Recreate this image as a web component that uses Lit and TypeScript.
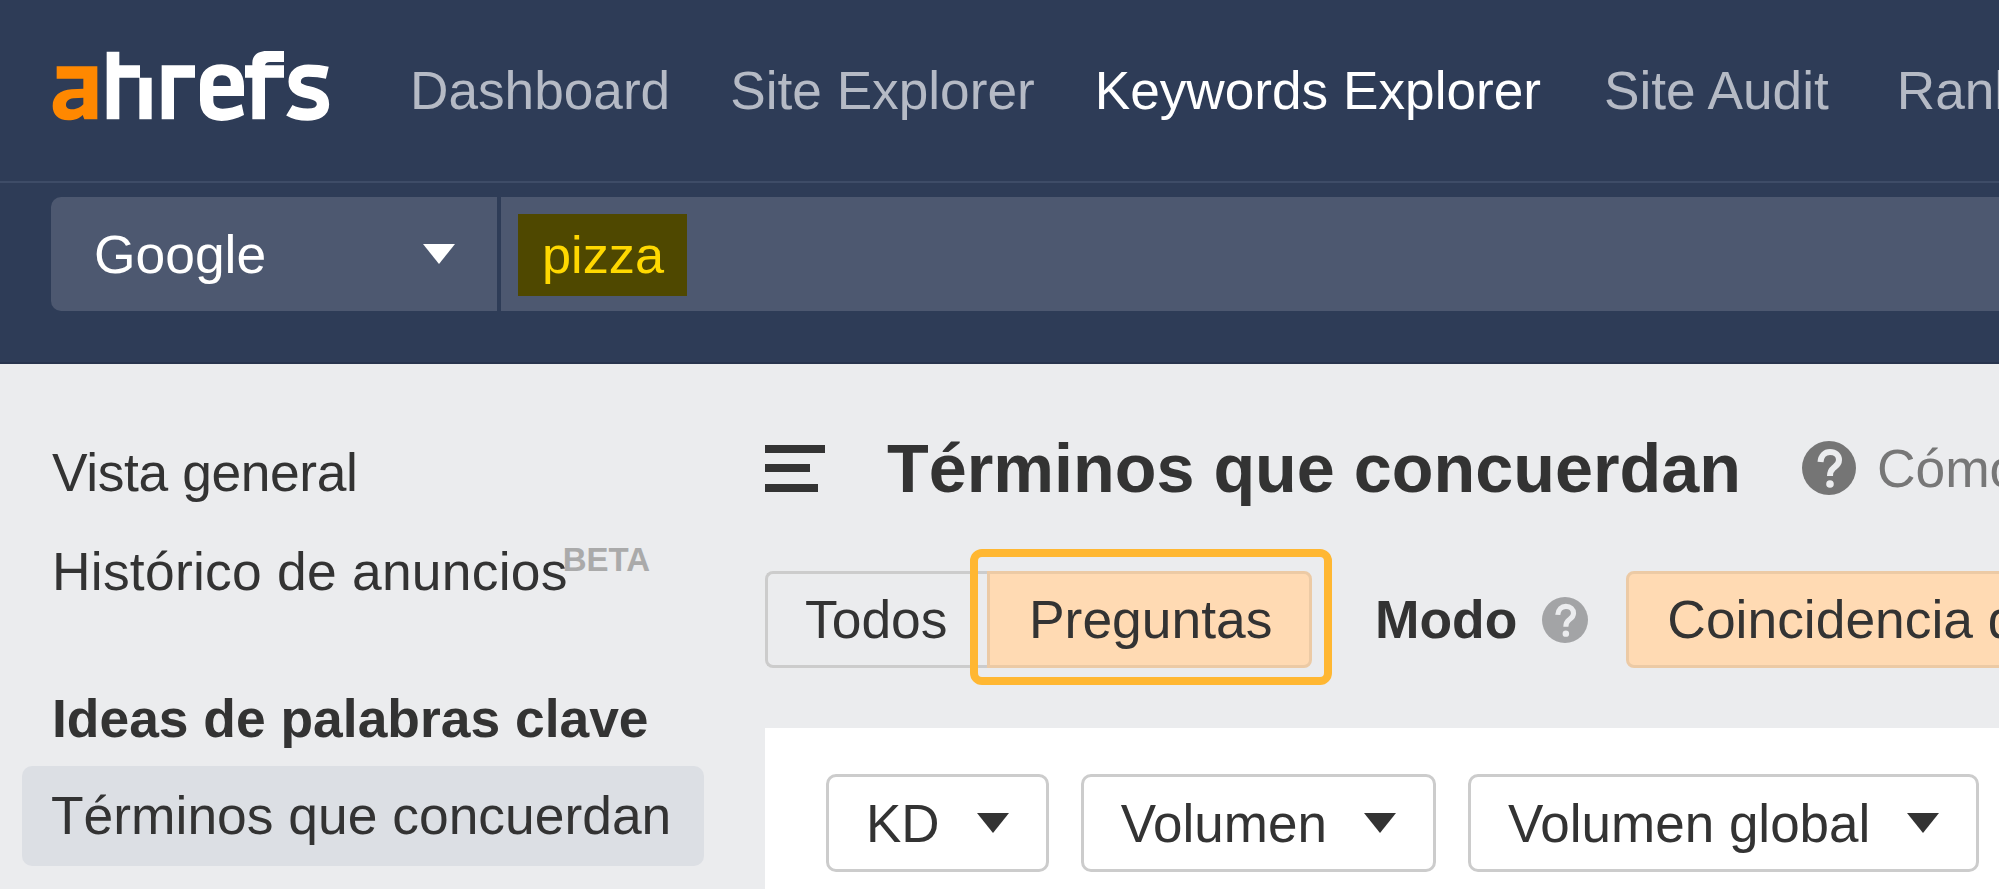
import { LitElement, html, css, svg } from "lit";
import { customElement } from "lit/decorators.js";

const helpIcon = (size: number, fill: string) => html`
    <svg class="help" width=${size} height=${size} viewBox="0 0 54 54">
        <circle cx="27" cy="27" r="27" fill=${fill}></circle>
        ${svg`<path d="M18.5 21C19 14.5 23 11 28 11C33.5 11 37 14.5 37 19C37 23.5 34 25 31.5 27C29 29 28 30.5 28 35" fill="none" stroke="#ebecee" stroke-width="6"></path>
        <circle cx="28" cy="43" r="3.8" fill="#ebecee"></circle>`}
    </svg>
`;

const caret = (cls: string) => html`<span class="caret ${cls}"></span>`;

@customElement("app-root")
export class AppRoot extends LitElement {
    static styles = css`
        :host {
            display: block;
            width: 1999px;
            height: 889px;
            overflow: hidden;
            background: #ebecee;
            color: #333;
            font-family: "Liberation Sans", Arial, sans-serif;
            font-size: 53.4px;
        }
        .header {
            height: 364px;
            box-sizing: border-box;
            background: #2e3c57;
            border-bottom: 2px solid #28344d;
        }
        .top {
            display: flex;
            align-items: center;
            height: 183px;
            box-sizing: border-box;
            padding-left: 40px;
            border-bottom: 2px solid #3e4c67;
        }
        .logo {
            flex: none;
            margin: -10px 70px 0 0;
        }
        .nav {
            display: flex;
            gap: 60px;
            white-space: nowrap;
            font-size: 53.2px;
            color: #b5bac5;
        }
        .nav .active {
            color: #fff;
        }
        .nav .audit {
            margin-left: 3px;
        }
        .nav .rank {
            margin-left: 8px;
        }
        .search {
            display: flex;
            gap: 4px;
            height: 114px;
            margin: 14px 0 0 51px;
        }
        .engine {
            flex: none;
            display: flex;
            align-items: center;
            justify-content: space-between;
            width: 446px;
            box-sizing: border-box;
            padding: 0 42px 0 43px;
            background: #4d5870;
            border-radius: 10px 0 0 10px;
            color: #fff;
        }
        .query {
            flex: 1;
            display: flex;
            align-items: center;
            padding-left: 17px;
            background: #4d5870;
        }
        .term {
            display: flex;
            align-items: center;
            height: 82px;
            margin-top: 2px;
            padding: 0 23px 0 24px;
            background: #4f4800;
            color: #ffd800;
            font-size: 52.3px;
        }
        .caret {
            flex: none;
            width: 0;
            height: 0;
            border-style: solid;
            border-width: 20px 16px 0;
            border-color: #333 transparent transparent;
        }
        .caret.light {
            border-top-color: #fff;
        }
        .main {
            display: flex;
        }
        .side {
            flex: none;
            width: 765px;
            box-sizing: border-box;
            padding: 79px 61px 0 22px;
            line-height: 60px;
        }
        .item {
            padding-left: 30px;
            white-space: nowrap;
        }
        .item + .item {
            margin-top: 39px;
        }
        .tight {
            letter-spacing: -0.4px;
        }
        .loose {
            letter-spacing: 0.25px;
        }
        .beta {
            margin-left: -5px;
            font-size: 33px;
            font-weight: 700;
            line-height: 0;
            letter-spacing: 0;
            color: #aaa;
            vertical-align: 19px;
        }
        .side .group {
            margin-top: 87px;
            font-weight: 700;
        }
        .side .selected {
            display: flex;
            align-items: center;
            height: 100px;
            margin-top: 17px;
            padding-left: 29px;
            background: #dcdfe4;
            border-radius: 10px;
        }
        .content {
            flex: 1;
            min-width: 0;
        }
        .title-row {
            display: flex;
            align-items: center;
            height: 80px;
            margin-top: 64px;
            white-space: nowrap;
        }
        .burger {
            flex: none;
            margin-right: 62px;
        }
        h1 {
            margin: 0 61px 0 0;
            font-size: 68.3px;
            font-weight: 700;
        }
        .help {
            flex: none;
        }
        .how {
            margin-left: 21px;
            color: #777;
        }
        .controls {
            display: flex;
            align-items: center;
            height: 97px;
            margin-top: 63px;
            white-space: nowrap;
        }
        .tabs {
            position: relative;
            display: flex;
            height: 97px;
            margin-right: 63px;
        }
        .tab {
            display: flex;
            align-items: center;
            box-sizing: border-box;
            border: 3px solid #ccc;
        }
        .tab.all {
            width: 222px;
            padding-left: 37px;
            border-right: none;
            border-radius: 8px 0 0 8px;
        }
        .tab.questions {
            width: 325px;
            padding-left: 39px;
            border-radius: 0 8px 8px 0;
        }
        .on {
            background: #ffdab3;
            border-color: #eccaa5;
        }
        .callout {
            position: absolute;
            top: -22px;
            left: 205px;
            width: 362px;
            height: 136px;
            box-sizing: border-box;
            border: 8px solid #ffb732;
            border-radius: 12px;
        }
        .mode {
            font-weight: 700;
            margin-right: 25px;
        }
        .mode-btn {
            display: flex;
            align-items: center;
            height: 97px;
            box-sizing: border-box;
            margin-left: 38px;
            padding: 0 38px;
            border: 3px solid #eccaa5;
            border-radius: 8px;
        }
        .panel {
            display: flex;
            gap: 32px;
            margin-top: 60px;
            padding: 46px 0 20px 61px;
            height: 200px;
            background: #fff;
            white-space: nowrap;
            font-size: 53px;
        }
        .filter {
            display: flex;
            align-items: center;
            gap: 37px;
            height: 98px;
            box-sizing: border-box;
            padding: 0 37px;
            border: 3px solid #ccc;
            border-radius: 10px;
        }
    `;

    render() {
        return html`
            <div class="header">
                <div class="top">
                    <svg class="logo" width="300" height="90" viewBox="0 0 900 270" role="img" aria-label="ahrefs">
                        <path fill="#ff8800" fill-rule="evenodd" d="M50 76H172V235H133L128 222C118 232 105 238 85 238C55 238 38 220 38 195C38 165 60 147 95 145L130 143V113H50ZM130 170L100 172C85 173 78 182 78 192C78 200 85 205 97 205C112 205 122 198 130 190Z"></path>
                        <path fill="#fff" d="M200 32H238V73H300V110H335V235H298V110H238V235H200ZM365 73H465V110H402V235H365Z"></path>
                        <path fill="#fff" fill-rule="evenodd" d="M545 70C590 70 612 95 612 135V165H520V178C520 195 530 203 548 203C568 203 585 198 605 190L612 222C590 233 568 240 545 240C505 240 480 218 480 178V130C480 92 505 70 545 70ZM520 135H572V128C572 112 562 103 546 103C530 103 520 112 520 128Z"></path>
                        <path fill="#fff" d="M637 235V110H615V73H637V65C637 45 652 30 680 30H732V63H690C680 63 675 67 675 75V73H732V110H675V235Z"></path>
                        <path fill="none" stroke="#fff" stroke-width="37" d="M862 95C845 91 825 89 805 89C778 89 764 103 764 122C764 143 783 149 805 154C830 160 849 166 849 190C849 211 830 221 803 221C782 221 763 217 748 208"></path>
                    </svg>
                    <nav class="nav">
                        <span>Dashboard</span>
                        <span>Site Explorer</span>
                        <span class="active">Keywords Explorer</span>
                        <span class="audit">Site Audit</span>
                        <span class="rank">Rank Tracker</span>
                    </nav>
                </div>
                <div class="search">
                    <div class="engine"><span>Google</span>${caret("light")}</div>
                    <div class="query"><span class="term">pizza</span></div>
                </div>
            </div>
            <div class="main">
                <aside class="side">
                    <div class="item tight">Vista general</div>
                    <div class="item loose">Histórico de anuncios<span class="beta">BETA</span></div>
                    <div class="item group">Ideas de palabras clave</div>
                    <div class="item selected">Términos que concuerdan</div>
                </aside>
                <section class="content">
                    <div class="title-row">
                        <svg class="burger" width="60" height="47" viewBox="0 0 60 47">
                            <rect width="60" height="8" fill="#333"></rect>
                            <rect y="19" width="45" height="8" fill="#333"></rect>
                            <rect y="39" width="53" height="8" fill="#333"></rect>
                        </svg>
                        <h1>Términos que concuerdan</h1>
                        ${helpIcon(54, "#757575")}
                        <span class="how">Cómo usar</span>
                    </div>
                    <div class="controls">
                        <div class="tabs">
                            <div class="tab all">Todos</div>
                            <div class="tab questions on">Preguntas</div>
                            <div class="callout"></div>
                        </div>
                        <span class="mode">Modo</span>
                        ${helpIcon(46, "#a3a4a6")}
                        <div class="mode-btn on">Coincidencia de frase</div>
                    </div>
                    <div class="panel">
                        <div class="filter">KD${caret("")}</div>
                        <div class="filter">Volumen${caret("")}</div>
                        <div class="filter">Volumen global${caret("")}</div>
                    </div>
                </section>
            </div>
        `;
    }
}
